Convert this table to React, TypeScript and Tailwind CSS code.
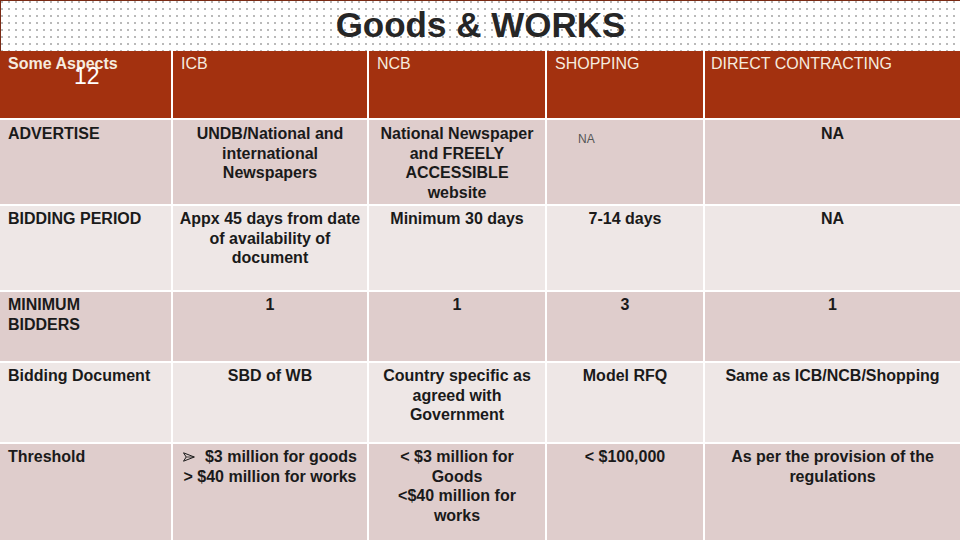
import React from "react";

const pink = "bg-[#dfcdcc]";
const light = "bg-[#eee7e6]";

type Row = {
  label: React.ReactNode;
  cells: React.ReactNode[];
  bg: string;
};

function ArrowBullet() {
  return (
    <svg width="12" height="10" viewBox="0 0 12 10" className="inline-block align-[0px] mr-[1px]">
      <path d="M0.5 0.8 L11.3 5 L0.5 9.2 L3.2 5 Z" fill="none" stroke="#1a1a1a" strokeWidth="1" strokeLinejoin="round" />
      <path d="M3.2 5 L11.3 5" stroke="#1a1a1a" strokeWidth="0.8" />
    </svg>
  );
}

const rows: Row[] = [
  {
    label: "ADVERTISE",
    bg: pink,
    cells: [
      <>UNDB/National and<br />international<br />Newspapers</>,
      <>National Newspaper<br />and FREELY<br />ACCESSIBLE<br />website</>,
      null,
      "NA",
    ],
  },
  {
    label: "BIDDING PERIOD",
    bg: light,
    cells: [
      <>Appx 45 days from date<br />of availability of<br />document</>,
      "Minimum 30 days",
      "7-14 days",
      "NA",
    ],
  },
  {
    label: <>MINIMUM<br />BIDDERS</>,
    bg: pink,
    cells: ["1", "1", "3", "1"],
  },
  {
    label: "Bidding Document",
    bg: light,
    cells: [
      "SBD of WB",
      <>Country specific as<br />agreed with<br />Government</>,
      "Model RFQ",
      "Same as ICB/NCB/Shopping",
    ],
  },
  {
    label: "Threshold",
    bg: pink,
    cells: [
      <>
        <ArrowBullet />
        {"  "}$3 million for goods
        <br />
        &gt; $40 million for works
      </>,
      <>&lt; $3 million for<br />Goods<br />&lt;$40 million for<br />works</>,
      "< $100,000",
      <>As per the provision of the<br />regulations</>,
    ],
  },
];

export default function App() {
  return (
    <div className="w-[960px] h-[540px] overflow-hidden bg-white font-['Liberation_Sans',Arial,sans-serif] relative">
      <div className="h-[51px] border-t border-l border-[#7a2a14] bg-white bg-[radial-gradient(circle_at_1px_1px,#555_0.5px,transparent_0.85px)] bg-[length:7px_7px] flex items-start justify-center">
        <div className="text-[35px] leading-[50px] font-bold text-[#262626] -mt-[1px]">
          Goods &amp; WORKS
        </div>
      </div>
      <div className="grid grid-cols-[171px_194px_176px_156px_1fr] grid-rows-[67px_84px_84px_69px_79px_96px] gap-[2px] bg-white">
        <div className="bg-[#a3310f] text-[#f6ebdf] text-[16px] leading-[19px] font-bold pl-[8px] pt-[3px]">
          Some Aspects
        </div>
        <div className="bg-[#a3310f] text-[#f6ebdf] text-[16px] leading-[19px] pl-[8px] pt-[3px]">ICB</div>
        <div className="bg-[#a3310f] text-[#f6ebdf] text-[16px] leading-[19px] pl-[8px] pt-[3px]">NCB</div>
        <div className="bg-[#a3310f] text-[#f6ebdf] text-[16px] leading-[19px] pl-[8px] pt-[3px]">SHOPPING</div>
        <div className="bg-[#a3310f] text-[#f6ebdf] text-[16px] leading-[19px] pl-[6px] pt-[3px]">DIRECT CONTRACTING</div>
        {rows.map((r, i) => (
          <React.Fragment key={i}>
            <div className={`${r.bg} text-[16px] leading-[19.5px] font-bold text-[#1a1a1a] pl-[8px] ${i === 0 ? "pt-[4px]" : "pt-[3px]"}`}>
              {r.label}
            </div>
            {r.cells.map((c, j) =>
              i === 0 && j === 2 ? (
                <div key={j} className={`${r.bg} pl-[31px] pt-[12px] text-[12px] leading-[14px] text-[#555]`}>
                  NA
                </div>
              ) : (
                <div
                  key={j}
                  className={`${r.bg} text-[16px] leading-[19.5px] font-bold text-[#1a1a1a] text-center ${i === 0 ? "pt-[4px]" : "pt-[3px]"} px-[2px] whitespace-pre-wrap`}
                >
                  {c}
                </div>
              )
            )}
          </React.Fragment>
        ))}
      </div>
      <div className="absolute left-[74px] top-[65px] text-[23px] leading-[23px] text-white">12</div>
    </div>
  );
}
